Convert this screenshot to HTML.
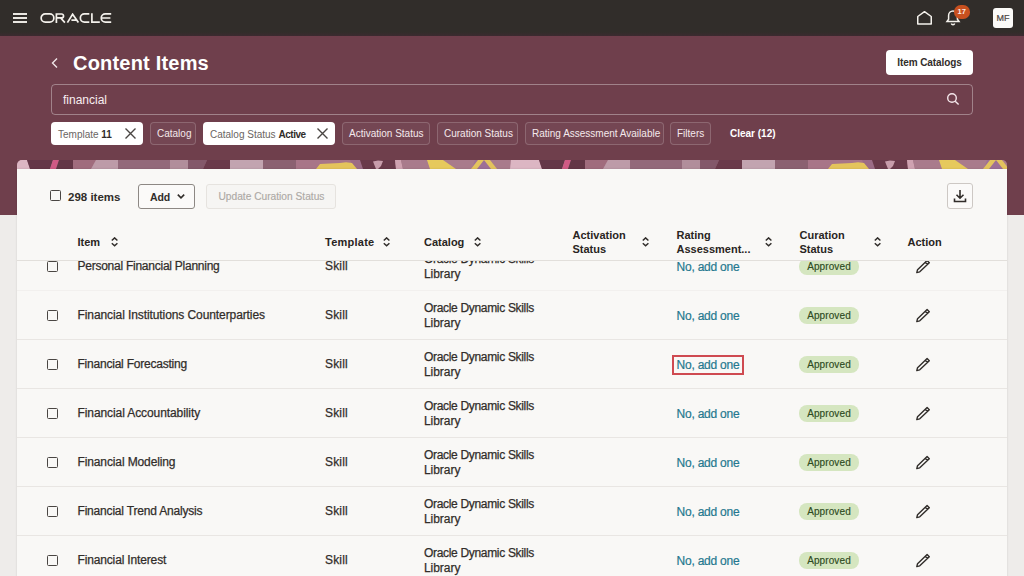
<!DOCTYPE html>
<html><head><meta charset="utf-8">
<style>
*{margin:0;padding:0;box-sizing:border-box}
html,body{width:1024px;height:576px;overflow:hidden;background:#eeecea;font-family:"Liberation Sans",sans-serif;color:#312d2a}
.abs{position:absolute}
#top{left:0;top:0;width:1024px;height:36px;background:#312d2a}
#hero{left:0;top:36px;width:1024px;height:178.6px;background:#6f3f4c}
.t{position:absolute;white-space:nowrap;line-height:1}
.chip{position:absolute;top:122px;height:23px;border-radius:4px;font-size:10px;line-height:23px;white-space:nowrap}
.chip.w{background:#fff;color:#6a6562;padding-top:1px}
.chip.w b{color:#312d2a}
.chip.o{border:1px solid rgba(255,255,255,0.18);background:rgba(255,255,255,0.04);color:#f4e9ec;line-height:22px}
#card{left:17px;top:169px;width:990px;height:420px;background:#f9f8f6;box-shadow:0 0 2px rgba(0,0,0,0.12)}
.row{position:absolute;left:17px;width:990px;height:1px;background:#e9e6e3}
.cb{position:absolute;width:12px;height:12px;border:1.3px solid #4a4643;border-radius:1.5px}
.bt{font-size:12px;color:#312d2a;-webkit-text-stroke:0.25px #312d2a}
.hd{font-size:11px;font-weight:bold;color:#292522}
.lnk{font-size:12px;color:#25788f;-webkit-text-stroke:0.2px #25788f}
.badge{position:absolute;height:16.5px;width:60px;border-radius:8px;background:#d5e6c0;color:#2d4a20;font-size:10px;line-height:17.5px;text-align:center;letter-spacing:0.1px;-webkit-text-stroke:0.15px #2d4a20}
</style></head><body>
<div id="top" class="abs"></div><div class="abs" style="left:0;top:32px;width:1024px;height:4px;background:linear-gradient(#312d2a,#3c2a30)"></div>
<!-- hamburger -->
<div class="abs" style="left:13px;top:13px;width:14px;height:2px;background:#e9e6e1"></div>
<div class="abs" style="left:13px;top:17px;width:14px;height:2px;background:#e9e6e1"></div>
<div class="abs" style="left:13px;top:21px;width:14px;height:2px;background:#e9e6e1"></div>
<!-- oracle logo -->
<svg class="abs" style="left:40px;top:13px" width="73" height="11" viewBox="0 0 73 11" fill="none" stroke="#f4f1ec" stroke-width="1.7">
<rect x="1.15" y="0.95" width="12.7" height="8.2" rx="4.1"/>
<path d="M16.4 10V1H21.6a1.95 1.95 0 0 1 0 3.9H16.4M20.6 4.9L24.9 9.6"/>
<path d="M27.4 9.6L32.6 1.2L38.4 9.6M31.4 7.1H36.7"/>
<path d="M49.3 0.95H44.45a4.1 4.1 0 0 0 0 8.2H49.3"/>
<path d="M51.9 0.2V9.15H59.8"/>
<path d="M71.2 0.95H65.35a4.1 4.1 0 0 0 0 8.2H71.2M61.5 5H70.4"/>
</svg>
<!-- home icon -->
<svg class="abs" style="left:915px;top:9px" width="18" height="18" viewBox="0 0 18 18" fill="none" stroke="#f4f1ec" stroke-width="1.5" stroke-linejoin="round">
<path d="M2.75 15.05V7.5L9.5 2.65L16.25 7.5V15.05Z"/>
</svg>
<!-- bell -->
<svg class="abs" style="left:944px;top:7.6px" width="18" height="18" viewBox="0 0 18 18" fill="none" stroke="#f4f1ec" stroke-width="1.5">
<path d="M3 13.5h12l-1.6-2.2V7.5a4.4 4.4 0 0 0-8.8 0v3.8Z"/><path d="M7.3 15.5a1.8 1.8 0 0 0 3.4 0"/>
</svg>
<div class="abs" style="left:953.6px;top:5.3px;width:16.4px;height:13.6px;border-radius:6.8px;background:#c8501f;color:#fbe9e4;font-size:7.5px;font-weight:bold;line-height:13.8px;text-align:center">17</div>
<div class="abs" style="left:993px;top:8px;width:20px;height:20px;border-radius:3px;background:#fbfaf8;color:#4b4642;font-size:9px;line-height:20px;text-align:center;-webkit-text-stroke:0.2px #4b4642">MF</div>

<div id="hero" class="abs"></div>
<!-- back chevron -->
<svg class="abs" style="left:50px;top:57px" width="10" height="12" viewBox="0 0 10 12" fill="none" stroke="#f1e6e9" stroke-width="1.4"><path d="M7 1.5L2.5 6L7 10.5"/></svg>
<div class="t" style="left:73px;top:53px;font-size:20px;font-weight:bold;color:#fff;letter-spacing:0.2px">Content Items</div>
<div class="abs" style="left:886px;top:50px;width:87px;height:25px;border-radius:4px;background:#fff;color:#312d2a;font-size:10px;font-weight:bold;line-height:26px;text-align:center;letter-spacing:-0.1px">Item Catalogs</div>
<!-- search -->
<div class="abs" style="left:51px;top:84px;width:922px;height:31px;border:1px solid rgba(255,255,255,0.35);border-radius:4px"></div>
<div class="t" style="left:63px;top:94px;font-size:12px;color:#f8eef1">financial</div>
<svg class="abs" style="left:945px;top:91px" width="16" height="16" viewBox="0 0 16 16" fill="none" stroke="#f4e6ea" stroke-width="1.4"><circle cx="7" cy="7" r="4.3"/><path d="M10.2 10.2L13.6 13.6"/></svg>
<!-- chips -->
<div class="chip w" style="left:51px;width:92px;padding-left:7px">Template <b>11</b></div>
<svg class="abs" style="left:124px;top:127px" width="13" height="13" viewBox="0 0 13 13" stroke="#4a4643" stroke-width="1.4"><path d="M1.5 1.5L11.5 11.5M11.5 1.5L1.5 11.5"/></svg>
<div class="chip o" style="left:150px;width:46px;padding-left:6px">Catalog</div>
<div class="chip w" style="left:203px;width:132px;padding-left:7px">Catalog Status <b style="letter-spacing:-0.45px">Active</b></div>
<svg class="abs" style="left:316px;top:127px" width="13" height="13" viewBox="0 0 13 13" stroke="#4a4643" stroke-width="1.4"><path d="M1.5 1.5L11.5 11.5M11.5 1.5L1.5 11.5"/></svg>
<div class="chip o" style="left:342px;width:88px;padding-left:6px">Activation Status</div>
<div class="chip o" style="left:437px;width:81px;padding-left:6px">Curation Status</div>
<div class="chip o" style="left:525px;width:139px;padding-left:6px">Rating Assessment Available</div>
<div class="chip o" style="left:670px;width:41px;padding-left:6px">Filters</div>
<div class="t" style="left:730px;top:129px;font-size:10px;font-weight:bold;color:#fff">Clear (12)</div>

<!-- pattern strip -->
<div class="abs" style="left:17px;top:160px;width:990px;height:10px;border-radius:5px 5px 0 0;overflow:hidden;background:#a47585">
<svg width="990" height="10" viewBox="0 0 990 10" style="display:block"><polygon fill="#dcb6c3" points="-18,0 10,0 13,9 -18,9"/><polygon fill="#643748" points="10,0 36,0 33,9 13,9"/><polygon fill="#d05a85" points="36,0 42,0 39,9 33,9"/><polygon fill="#633646" points="42,0 56,0 56,9 39,9"/><polygon fill="#a06c7d" points="56,0 79,0 74,9 56,9"/><polygon fill="#bd9ba8" points="79,0 101,0 101,9 74,9"/><polygon fill="#93697a" points="101,0 153,0 153,9 101,9"/><polygon fill="#b18e9b" points="153,0 171,0 171,9 153,9"/><polygon fill="#83586a" points="171,0 190,0 186,9 171,9"/><polygon fill="#6a3a4b" points="190,0 213,0 213,9 186,9"/><polygon fill="#c2a4b0" points="213,0 246,0 246,9 213,9"/><polygon fill="#8b6171" points="246,0 279,0 279,9 246,9"/><polygon fill="#a87588" points="279,0 345,0 345,9 279,9"/><polygon fill="#9b6b86" points="333,0 345,0 349,9 337,9"/><polygon fill="#e4c45c" points="299,9 303,4 313,3.5 323,3 329,2.3 335,3 340,9"/><polygon fill="#69394a" points="343,0 367,0 367,9 346,9"/><polygon fill="#c79cab" points="356,1.5 361,0.5 366,1 364,6 361,9 359,9"/><polygon fill="#6a3a4b" points="367,0 378,0 379,9 367,9"/><polygon fill="#cfa2b1" points="378,0 384,0 386,9 379,9"/><polygon fill="#a97b8c" points="384,0 495,0 495,9 386,9"/><polygon fill="#e6c95c" points="410,0 426,0 439,9 413,9"/><polygon fill="#9d6f96" points="458,0 473,0 476,9 455,9"/><polygon fill="#e3c35e" points="461,0 467,0 460,9 454,9"/><polygon fill="#e3c35e" points="467,0 473,0 480,9 474,9"/><polygon fill="#dcb6c3" points="494,0 495,0 495,9 493,9"/><polygon fill="#dcb6c3" points="494,0 522,0 525,9 494,9"/><polygon fill="#643748" points="522,0 548,0 545,9 525,9"/><polygon fill="#d05a85" points="548,0 554,0 551,9 545,9"/><polygon fill="#633646" points="554,0 568,0 568,9 551,9"/><polygon fill="#a06c7d" points="568,0 591,0 586,9 568,9"/><polygon fill="#bd9ba8" points="591,0 613,0 613,9 586,9"/><polygon fill="#93697a" points="613,0 665,0 665,9 613,9"/><polygon fill="#b18e9b" points="665,0 683,0 683,9 665,9"/><polygon fill="#83586a" points="683,0 702,0 698,9 683,9"/><polygon fill="#6a3a4b" points="702,0 725,0 725,9 698,9"/><polygon fill="#c2a4b0" points="725,0 758,0 758,9 725,9"/><polygon fill="#8b6171" points="758,0 791,0 791,9 758,9"/><polygon fill="#a87588" points="791,0 857,0 857,9 791,9"/><polygon fill="#9b6b86" points="845,0 857,0 861,9 849,9"/><polygon fill="#e4c45c" points="811,9 815,4 825,3.5 835,3 841,2.3 847,3 852,9"/><polygon fill="#69394a" points="855,0 879,0 879,9 858,9"/><polygon fill="#c79cab" points="868,1.5 873,0.5 878,1 876,6 873,9 871,9"/><polygon fill="#6a3a4b" points="879,0 890,0 891,9 879,9"/><polygon fill="#cfa2b1" points="890,0 896,0 898,9 891,9"/><polygon fill="#a97b8c" points="896,0 1007,0 1007,9 898,9"/><polygon fill="#e6c95c" points="922,0 938,0 951,9 925,9"/><polygon fill="#9d6f96" points="970,0 985,0 988,9 967,9"/><polygon fill="#e3c35e" points="973,0 979,0 972,9 966,9"/><polygon fill="#e3c35e" points="979,0 985,0 992,9 986,9"/><polygon fill="#dcb6c3" points="1006,0 1007,0 1007,9 1005,9"/></svg>
</div>

<div id="card" class="abs"></div>

<!-- toolbar -->
<div class="cb" style="left:50px;top:190.3px;width:11px;height:11px"></div>
<div class="t" style="left:68px;top:191.5px;font-size:11.5px;font-weight:bold">298 items</div>
<div class="abs" style="left:138px;top:183.5px;width:57px;height:25px;border:1px solid #8d8884;border-radius:3px;background:#fbfaf9"></div>
<div class="t" style="left:150px;top:191.5px;font-size:10.5px;font-weight:bold;letter-spacing:-0.15px">Add</div>
<svg class="abs" style="left:176px;top:192px" width="10" height="8" viewBox="0 0 10 8" fill="none" stroke="#312d2a" stroke-width="1.6"><path d="M1.8 2.6L5 5.8L8.2 2.6"/></svg>
<div class="abs" style="left:206px;top:184px;width:130px;height:25px;border:1px solid #e6e3df;border-radius:3px;background:#f6f5f3"></div>
<div class="t" style="left:218.5px;top:192px;font-size:10.2px;color:#ada9a5;-webkit-text-stroke:0.15px #ada9a5">Update Curation Status</div>
<div class="abs" style="left:947px;top:183px;width:26px;height:26px;border:1px solid #cdc8c4;border-radius:3px;background:#fbfaf9"></div>
<svg class="abs" style="left:951px;top:187px" width="18" height="18" viewBox="0 0 18 18" fill="none" stroke="#312d2a" stroke-width="1.6"><path d="M9 3V11M5.5 7.8L9 11.2L12.5 7.8M3.5 11.5V14.5H14.5V11.5"/></svg>

<!--ROWS-->
<div class="abs" style="left:0;top:261px;width:1024px;height:315px;overflow:hidden">
<div class="cb" style="left:47px;top:-0.2px;width:11px;height:11px"></div>
<div class="t bt" style="left:77.5px;top:-0.7px;letter-spacing:-0.25px">Personal Financial Planning</div>
<div class="t bt" style="left:325px;top:-0.7px;letter-spacing:0.17px">Skill</div>
<div class="t bt" style="left:424px;top:-8.5px;letter-spacing:-0.32px">Oracle Dynamic Skills</div>
<div class="t bt" style="left:424px;top:6.7px;letter-spacing:-0.05px">Library</div>
<div class="t lnk" style="left:676.5px;top:0.0px;letter-spacing:-0.22px">No, add one</div>
<div class="badge" style="left:799px;top:-3.0px">Approved</div>
<svg class="abs" style="left:914px;top:-2.4px" width="17" height="16" viewBox="0 0 17 16" fill="none" stroke="#312d2a" stroke-width="1.4" stroke-linejoin="round"><path d="M2.8 13.6L3.54 10.66L13.1 1.5L15.3 3.7L5.74 12.86Z M11.26 3.34L13.46 5.54"/></svg>
<div class="row" style="top:29.0px;background:#f2f0ee"></div>
<div class="cb" style="left:47px;top:48.8px;width:11px;height:11px"></div>
<div class="t bt" style="left:77.5px;top:48.3px;letter-spacing:-0.09px">Financial Institutions Counterparties</div>
<div class="t bt" style="left:325px;top:48.3px;letter-spacing:0.17px">Skill</div>
<div class="t bt" style="left:424px;top:40.5px;letter-spacing:-0.32px">Oracle Dynamic Skills</div>
<div class="t bt" style="left:424px;top:55.7px;letter-spacing:-0.05px">Library</div>
<div class="t lnk" style="left:676.5px;top:49.0px;letter-spacing:-0.22px">No, add one</div>
<div class="badge" style="left:799px;top:46.0px">Approved</div>
<svg class="abs" style="left:914px;top:46.6px" width="17" height="16" viewBox="0 0 17 16" fill="none" stroke="#312d2a" stroke-width="1.4" stroke-linejoin="round"><path d="M2.8 13.6L3.54 10.66L13.1 1.5L15.3 3.7L5.74 12.86Z M11.26 3.34L13.46 5.54"/></svg>
<div class="row" style="top:78.0px"></div>
<div class="cb" style="left:47px;top:97.8px;width:11px;height:11px"></div>
<div class="t bt" style="left:77.5px;top:97.3px;letter-spacing:-0.22px">Financial Forecasting</div>
<div class="t bt" style="left:325px;top:97.3px;letter-spacing:0.17px">Skill</div>
<div class="t bt" style="left:424px;top:89.5px;letter-spacing:-0.32px">Oracle Dynamic Skills</div>
<div class="t bt" style="left:424px;top:104.7px;letter-spacing:-0.05px">Library</div>
<div class="t lnk" style="left:676.5px;top:98.0px;letter-spacing:-0.22px">No, add one</div>
<div class="badge" style="left:799px;top:95.0px">Approved</div>
<svg class="abs" style="left:914px;top:95.6px" width="17" height="16" viewBox="0 0 17 16" fill="none" stroke="#312d2a" stroke-width="1.4" stroke-linejoin="round"><path d="M2.8 13.6L3.54 10.66L13.1 1.5L15.3 3.7L5.74 12.86Z M11.26 3.34L13.46 5.54"/></svg>
<div class="row" style="top:127.0px"></div>
<div class="abs" style="left:672px;top:93.5px;width:72px;height:20.5px;border:2px solid #cf4a51"></div>
<div class="cb" style="left:47px;top:146.8px;width:11px;height:11px"></div>
<div class="t bt" style="left:77.5px;top:146.3px;letter-spacing:-0.09px">Financial Accountability</div>
<div class="t bt" style="left:325px;top:146.3px;letter-spacing:0.17px">Skill</div>
<div class="t bt" style="left:424px;top:138.5px;letter-spacing:-0.32px">Oracle Dynamic Skills</div>
<div class="t bt" style="left:424px;top:153.7px;letter-spacing:-0.05px">Library</div>
<div class="t lnk" style="left:676.5px;top:147.0px;letter-spacing:-0.22px">No, add one</div>
<div class="badge" style="left:799px;top:144.0px">Approved</div>
<svg class="abs" style="left:914px;top:144.6px" width="17" height="16" viewBox="0 0 17 16" fill="none" stroke="#312d2a" stroke-width="1.4" stroke-linejoin="round"><path d="M2.8 13.6L3.54 10.66L13.1 1.5L15.3 3.7L5.74 12.86Z M11.26 3.34L13.46 5.54"/></svg>
<div class="row" style="top:176.0px"></div>
<div class="cb" style="left:47px;top:195.8px;width:11px;height:11px"></div>
<div class="t bt" style="left:77.5px;top:195.3px;letter-spacing:-0.12px">Financial Modeling</div>
<div class="t bt" style="left:325px;top:195.3px;letter-spacing:0.17px">Skill</div>
<div class="t bt" style="left:424px;top:187.5px;letter-spacing:-0.32px">Oracle Dynamic Skills</div>
<div class="t bt" style="left:424px;top:202.7px;letter-spacing:-0.05px">Library</div>
<div class="t lnk" style="left:676.5px;top:196.0px;letter-spacing:-0.22px">No, add one</div>
<div class="badge" style="left:799px;top:193.0px">Approved</div>
<svg class="abs" style="left:914px;top:193.6px" width="17" height="16" viewBox="0 0 17 16" fill="none" stroke="#312d2a" stroke-width="1.4" stroke-linejoin="round"><path d="M2.8 13.6L3.54 10.66L13.1 1.5L15.3 3.7L5.74 12.86Z M11.26 3.34L13.46 5.54"/></svg>
<div class="row" style="top:225.0px"></div>
<div class="cb" style="left:47px;top:244.8px;width:11px;height:11px"></div>
<div class="t bt" style="left:77.5px;top:244.3px;letter-spacing:-0.19px">Financial Trend Analysis</div>
<div class="t bt" style="left:325px;top:244.3px;letter-spacing:0.17px">Skill</div>
<div class="t bt" style="left:424px;top:236.5px;letter-spacing:-0.32px">Oracle Dynamic Skills</div>
<div class="t bt" style="left:424px;top:251.7px;letter-spacing:-0.05px">Library</div>
<div class="t lnk" style="left:676.5px;top:245.0px;letter-spacing:-0.22px">No, add one</div>
<div class="badge" style="left:799px;top:242.0px">Approved</div>
<svg class="abs" style="left:914px;top:242.6px" width="17" height="16" viewBox="0 0 17 16" fill="none" stroke="#312d2a" stroke-width="1.4" stroke-linejoin="round"><path d="M2.8 13.6L3.54 10.66L13.1 1.5L15.3 3.7L5.74 12.86Z M11.26 3.34L13.46 5.54"/></svg>
<div class="row" style="top:274.0px"></div>
<div class="cb" style="left:47px;top:293.8px;width:11px;height:11px"></div>
<div class="t bt" style="left:77.5px;top:293.3px;letter-spacing:-0.15px">Financial Interest</div>
<div class="t bt" style="left:325px;top:293.3px;letter-spacing:0.17px">Skill</div>
<div class="t bt" style="left:424px;top:285.5px;letter-spacing:-0.32px">Oracle Dynamic Skills</div>
<div class="t bt" style="left:424px;top:300.7px;letter-spacing:-0.05px">Library</div>
<div class="t lnk" style="left:676.5px;top:294.0px;letter-spacing:-0.22px">No, add one</div>
<div class="badge" style="left:799px;top:291.0px">Approved</div>
<svg class="abs" style="left:914px;top:291.6px" width="17" height="16" viewBox="0 0 17 16" fill="none" stroke="#312d2a" stroke-width="1.4" stroke-linejoin="round"><path d="M2.8 13.6L3.54 10.66L13.1 1.5L15.3 3.7L5.74 12.86Z M11.26 3.34L13.46 5.54"/></svg>
</div>
<div class="abs" style="left:17px;top:260px;width:990px;height:1px;background:#e2dfdb"></div>
<div class="t hd" style="left:77.5px;top:236.7px">Item</div><svg class="abs" style="left:109.7px;top:236.6px" width="9" height="11" viewBox="0 0 9 11" fill="none" stroke="#312d2a" stroke-width="1.5"><path d="M1.8 3.5L4.6 0.9L7.4 3.5M1.8 6.2L4.6 8.8L7.4 6.2"/></svg>
<div class="t hd" style="left:325px;top:236.7px;letter-spacing:0.25px">Template</div><svg class="abs" style="left:382px;top:236.6px" width="9" height="11" viewBox="0 0 9 11" fill="none" stroke="#312d2a" stroke-width="1.5"><path d="M1.8 3.5L4.6 0.9L7.4 3.5M1.8 6.2L4.6 8.8L7.4 6.2"/></svg>
<div class="t hd" style="left:424px;top:236.7px">Catalog</div><svg class="abs" style="left:472.5px;top:236.6px" width="9" height="11" viewBox="0 0 9 11" fill="none" stroke="#312d2a" stroke-width="1.5"><path d="M1.8 3.5L4.6 0.9L7.4 3.5M1.8 6.2L4.6 8.8L7.4 6.2"/></svg>
<div class="t hd" style="left:572.5px;top:229.7px">Activation</div><div class="t hd" style="left:572.5px;top:243.9px">Status</div><svg class="abs" style="left:640.7px;top:236.6px" width="9" height="11" viewBox="0 0 9 11" fill="none" stroke="#312d2a" stroke-width="1.5"><path d="M1.8 3.5L4.6 0.9L7.4 3.5M1.8 6.2L4.6 8.8L7.4 6.2"/></svg>
<div class="t hd" style="left:676.5px;top:229.7px">Rating</div><div class="t hd" style="left:676.5px;top:243.9px">Assessment...</div><svg class="abs" style="left:764px;top:236.6px" width="9" height="11" viewBox="0 0 9 11" fill="none" stroke="#312d2a" stroke-width="1.5"><path d="M1.8 3.5L4.6 0.9L7.4 3.5M1.8 6.2L4.6 8.8L7.4 6.2"/></svg>
<div class="t hd" style="left:799.5px;top:229.7px">Curation</div><div class="t hd" style="left:799.5px;top:243.9px">Status</div><svg class="abs" style="left:872.5px;top:236.6px" width="9" height="11" viewBox="0 0 9 11" fill="none" stroke="#312d2a" stroke-width="1.5"><path d="M1.8 3.5L4.6 0.9L7.4 3.5M1.8 6.2L4.6 8.8L7.4 6.2"/></svg>
<div class="t hd" style="left:907.5px;top:236.7px">Action</div>
<!--/ROWS-->
</body></html>
